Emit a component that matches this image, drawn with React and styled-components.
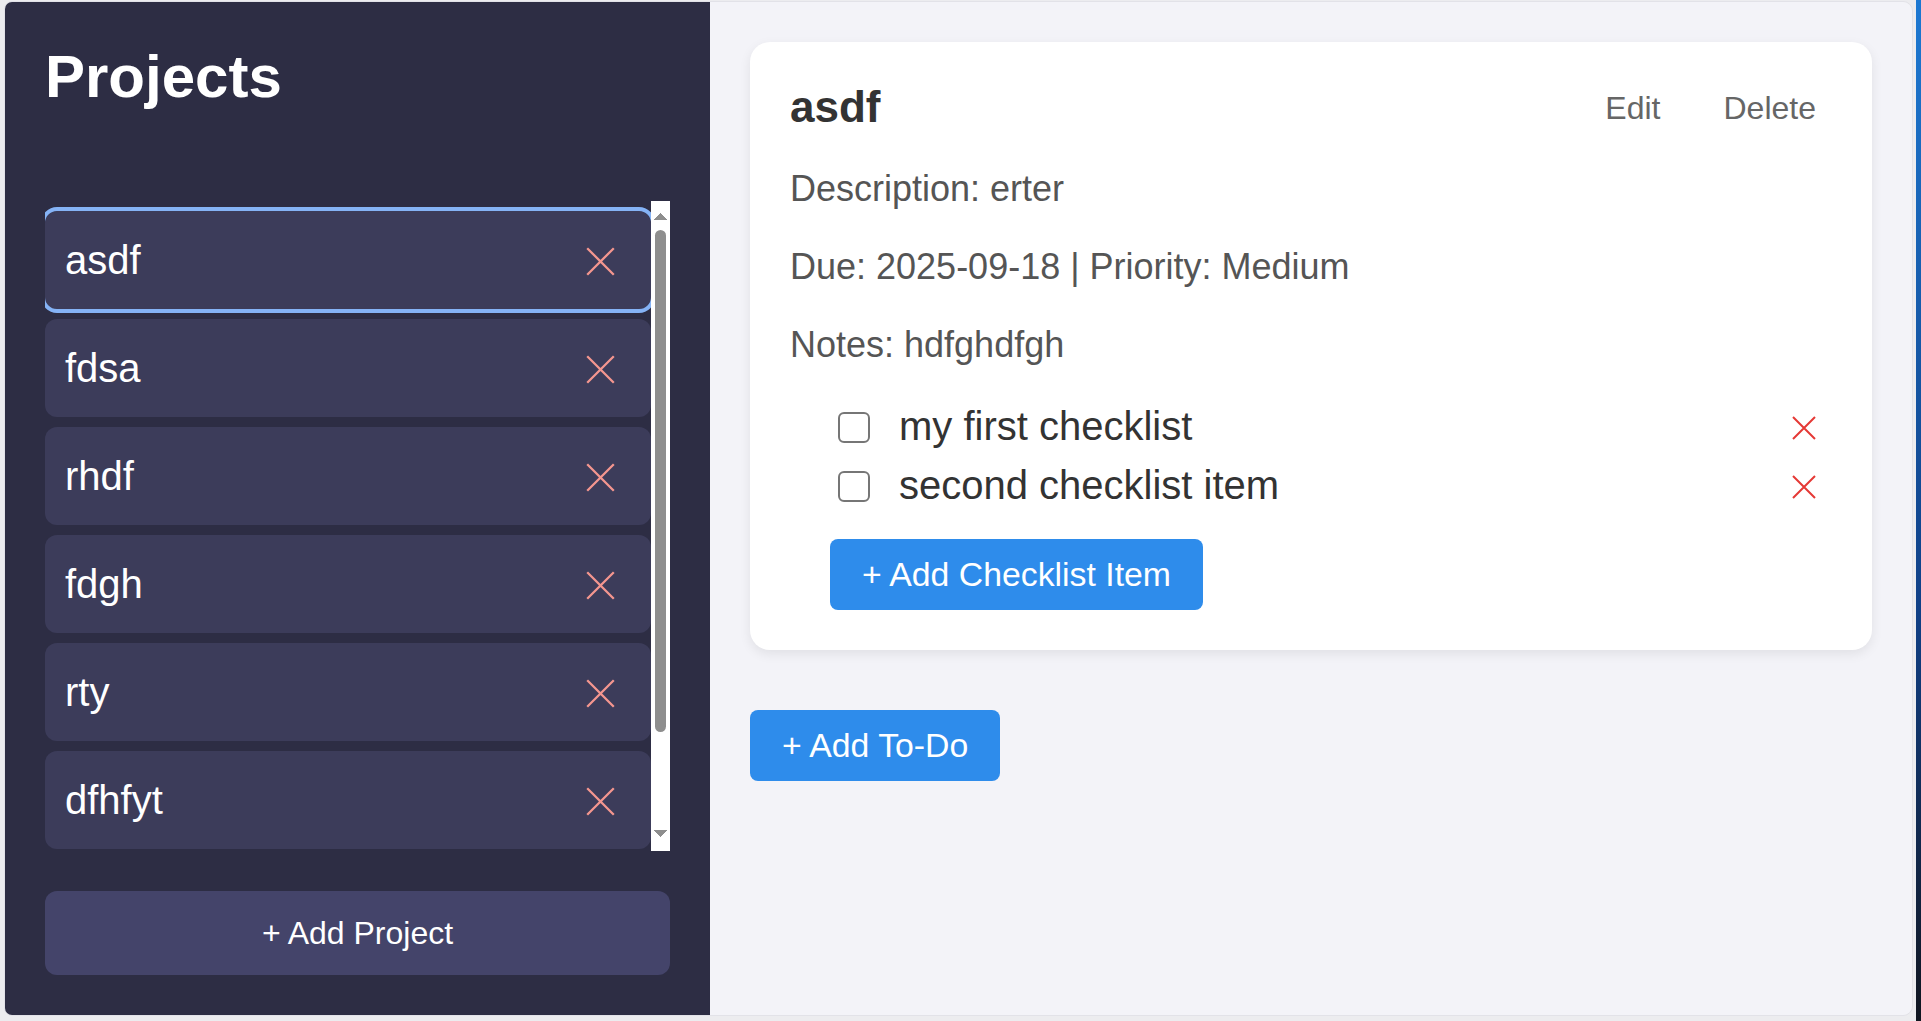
import React from "react";
import styled, { createGlobalStyle } from "styled-components";

const GlobalStyle = createGlobalStyle`
  * { box-sizing: border-box; }
  html, body {
    margin: 0;
    height: 100%;
    background: #ececef;
    font-family: "Liberation Sans", Arial, sans-serif;
  }
  #root { height: 100%; }
`;

const Page = styled.div`
  display: flex;
  height: 100vh;
  padding: 1px 0 5px 4px;
  gap: 3px;
`;

const Frame = styled.div`
  flex: 1;
  display: flex;
  border-radius: 8px 10px 10px 8px;
  border: 1px solid #e2e2e8;
  overflow: hidden;
`;

const DesktopEdge = styled.div`
  width: 5px;
  margin: -1px 0 -5px;
  background: linear-gradient(#1c78d2, #0f3f86 60%, #10151f);
`;

const Sidebar = styled.aside`
  width: 705px;
  flex-shrink: 0;
  background: #2d2d44;
  padding: 40px;
  display: flex;
  flex-direction: column;
`;

const SidebarTitle = styled.h1`
  margin: 0;
  font-size: 60px;
  font-weight: 700;
  color: #fff;
`;

const ListArea = styled.div`
  margin-top: 90px;
  height: 650px;
  display: flex;
`;

const ProjectList = styled.div`
  flex: 1;
  min-width: 0;
  overflow: hidden;
  padding: 10px 0;
  display: flex;
  flex-direction: column;
  gap: 10px;
`;

// drawn scrollbar (headless browser hides native ones)
const ScrollTrack = styled.div`
  width: 19px;
  flex-shrink: 0;
  background: #fff;
  display: flex;
  flex-direction: column;
  align-items: center;
`;

const ScrollArrow = styled.div`
  width: 100%;
  height: 28px;
  flex-shrink: 0;
  background-repeat: no-repeat;
  background-size: 13px 7px;
  background-image: ${(p) =>
    p.$down
      ? "conic-gradient(from -43deg at 50% 100%, #8e8e8e 86deg, transparent 0)"
      : "conic-gradient(from 137deg at 50% 0, #8e8e8e 86deg, transparent 0)"};
  background-position: ${(p) => (p.$down ? "center 7px" : "center 12px")};
`;

const ScrollThumb = styled.div`
  width: 11px;
  height: 502px;
  margin: 1px 0 auto;
  border-radius: 6px;
  background: #8e8e8e;
`;

const ProjectItem = styled.div`
  flex-shrink: 0;
  height: 98px;
  border-radius: 12px;
  background: #3c3c5a;
  padding: 0 36px 0 20px;
  display: flex;
  align-items: center;
  justify-content: space-between;
  font-size: 40px;
  color: #fff;
  cursor: pointer;
  outline: ${(p) => (p.$active ? "4px solid #85b3f6" : "none")};
`;

const IconButton = styled.button`
  border: none;
  background: none;
  padding: 0;
  margin: 0;
  display: flex;
  align-items: center;
  justify-content: center;
  cursor: pointer;
`;

const DeleteProject = styled(IconButton)`
  margin-top: 3px;
`;

const AddProjectButton = styled.button`
  margin-top: 40px;
  height: 86px;
  border: none;
  border-radius: 12px;
  background: #44446a;
  color: #fff;
  font-family: inherit;
  font-size: 32px;
  cursor: pointer;
`;

const Main = styled.main`
  flex: 1;
  background: #f3f3f8;
  padding: 40px;
  display: flex;
  flex-direction: column;
  align-items: flex-start;
`;

const Card = styled.section`
  width: 100%;
  background: #fff;
  border-radius: 20px;
  padding: 40px;
  box-shadow: 0 4px 12px rgba(0, 0, 0, 0.08);
`;

const CardHeader = styled.div`
  display: flex;
  align-items: center;
  justify-content: space-between;
`;

const CardTitle = styled.h2`
  margin: 0;
  font-size: 44px;
  font-weight: 700;
  color: #333;
`;

const HeaderActions = styled.div`
  display: flex;
  gap: 31px;
  padding-top: 3px;
`;

const TextButton = styled.button`
  border: none;
  background: none;
  padding: 0 16px;
  font-family: inherit;
  font-size: 32px;
  color: #666;
  cursor: pointer;
`;

const Detail = styled.p`
  margin: 36px 0;
  font-size: 36px;
  color: #555;
`;

const Checklist = styled.div`
  display: flex;
  flex-direction: column;
  gap: 13px;
  padding-top: 1px;
`;

const CheckRow = styled.div`
  display: flex;
  align-items: center;
  height: 46px;
  padding-left: 48px;
  font-size: 40px;
  color: #333;
`;

const CheckBox = styled.input`
  appearance: none;
  width: 32px;
  height: 31px;
  margin: 2px 29px 0 0;
  border: 2px solid #767676;
  border-radius: 6px;
  background: #fff;
  flex-shrink: 0;
`;

const CheckText = styled.span`
  flex: 1;
`;

const RemoveButton = styled(IconButton)`
  margin: 4px 16px 0 0;
`;

const PrimaryButton = styled.button`
  height: 71px;
  padding: 0 32px;
  border: none;
  border-radius: 8px;
  background: #2e8ceb;
  color: #fff;
  font-family: inherit;
  font-size: 33.8px;
  cursor: pointer;
  margin: ${(p) => p.$margin || "0"};
`;

const XIcon = ({ size, color, stroke }) => (
  <svg width={size} height={size} viewBox="0 0 24 24" fill="none">
    <path d="M1 1 L23 23 M23 1 L1 23" stroke={color} strokeWidth={stroke} />
  </svg>
);

const projects = ["asdf", "fdsa", "rhdf", "fdgh", "rty", "dfhfyt"];
const checklist = ["my first checklist", "second checklist item"];

export default function App() {
  return (
    <>
      <GlobalStyle />
      <Page>
        <Frame>
          <Sidebar>
            <SidebarTitle>Projects</SidebarTitle>
            <ListArea>
              <ProjectList>
                {projects.map((name, i) => (
                  <ProjectItem key={name} $active={i === 0}>
                    <span>{name}</span>
                    <DeleteProject aria-label="Delete project">
                      <XIcon size={29} color="#f4968f" stroke={1.9} />
                    </DeleteProject>
                  </ProjectItem>
                ))}
              </ProjectList>
              <ScrollTrack>
                <ScrollArrow />
                <ScrollThumb />
                <ScrollArrow $down />
              </ScrollTrack>
            </ListArea>
            <AddProjectButton>+ Add Project</AddProjectButton>
          </Sidebar>
          <Main>
            <Card>
              <CardHeader>
                <CardTitle>asdf</CardTitle>
                <HeaderActions>
                  <TextButton>Edit</TextButton>
                  <TextButton>Delete</TextButton>
                </HeaderActions>
              </CardHeader>
              <Detail>Description: erter</Detail>
              <Detail>Due: 2025-09-18 | Priority: Medium</Detail>
              <Detail>Notes: hdfghdfgh</Detail>
              <Checklist>
                {checklist.map((item) => (
                  <CheckRow key={item}>
                    <CheckBox type="checkbox" />
                    <CheckText>{item}</CheckText>
                    <RemoveButton aria-label="Remove item">
                      <XIcon size={24} color="#e53935" stroke={2} />
                    </RemoveButton>
                  </CheckRow>
                ))}
              </Checklist>
              <PrimaryButton $margin="31px 0 0 40px">+ Add Checklist Item</PrimaryButton>
            </Card>
            <PrimaryButton $margin="60px 0 0">+ Add To-Do</PrimaryButton>
          </Main>
        </Frame>
        <DesktopEdge />
      </Page>
    </>
  );
}
